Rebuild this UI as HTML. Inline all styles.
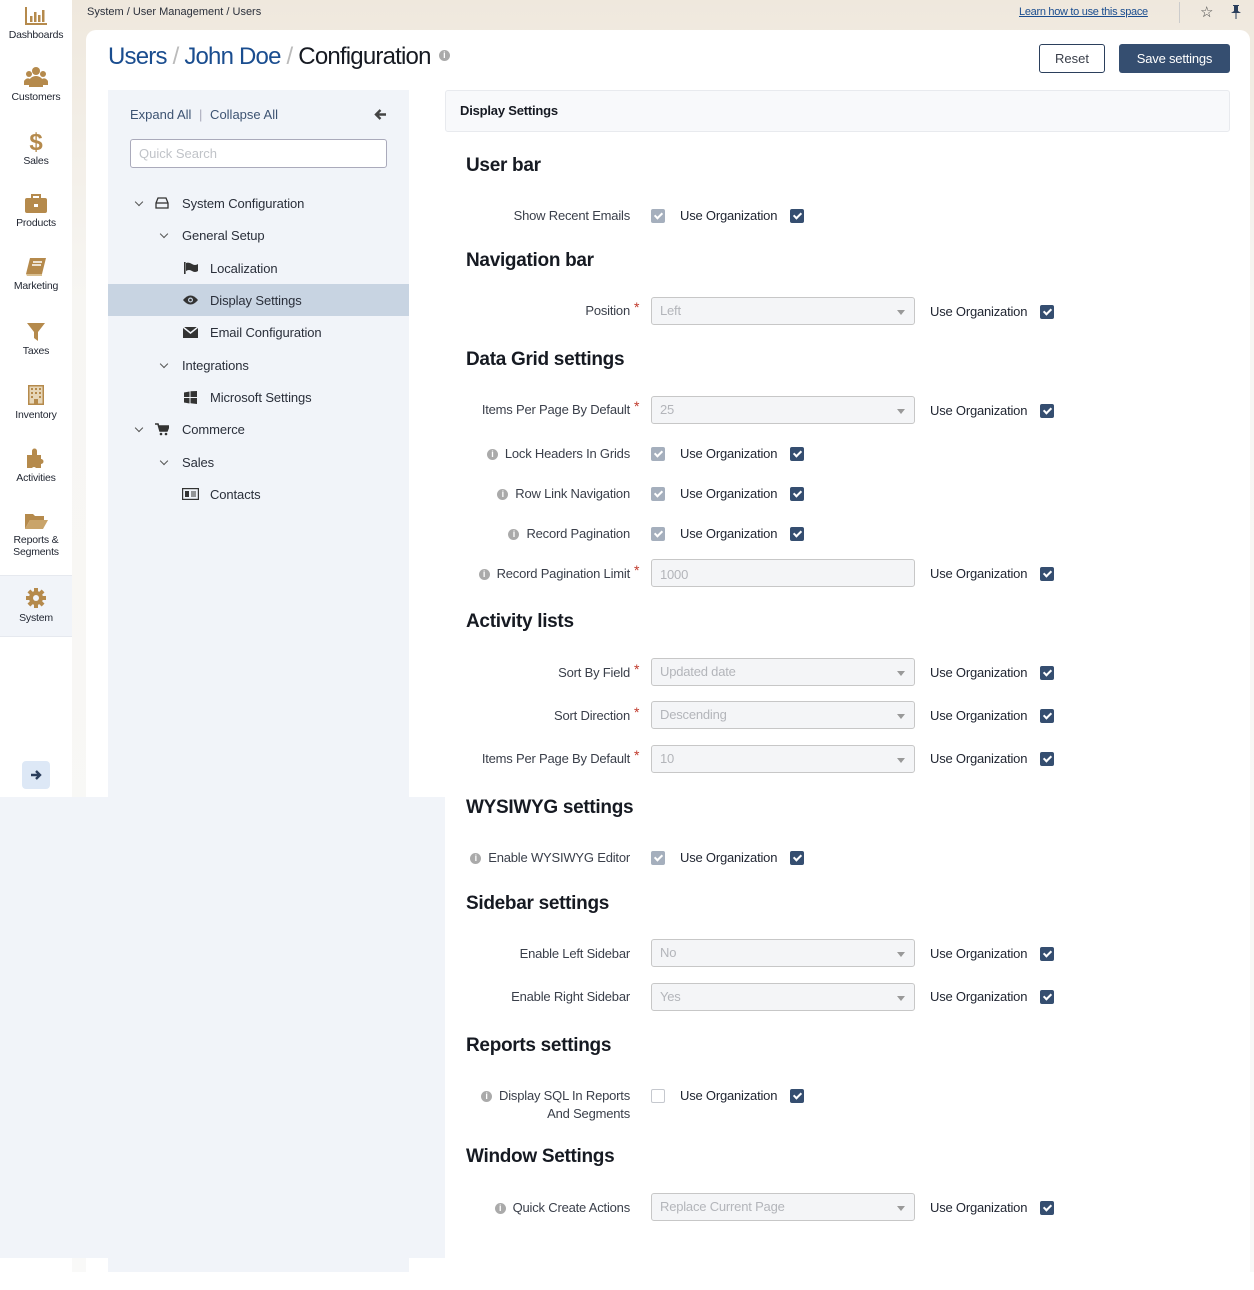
<!DOCTYPE html>
<html><head><meta charset="utf-8"><style>
*{box-sizing:border-box;margin:0;padding:0}
body{width:1254px;height:1290px;position:relative;overflow:hidden;background:#fff;font-family:"Liberation Sans",sans-serif;color:#2a2f3a}
.a{position:absolute}
.nav{left:0;top:0;width:72px;height:1272px;background:#fff}
.ni{position:absolute;left:0;width:72px;text-align:center;font-size:10.5px;color:#1f2430;letter-spacing:-.2px}
.ni svg{display:block;margin:0 auto 3px}
.bg{left:72px;top:0;width:1182px;height:1272px;background:linear-gradient(#efe8dd,#f7f6f3 300px,#f9f9f8)}
.card{left:86px;top:30px;width:1164px;height:1242px;background:#fff;border-radius:10px 10px 0 0}
.tree{left:108px;top:90px;width:301px;height:1182px;background:#f1f4f9}
.ti{position:absolute;font-size:13px;color:#2a2f3a;letter-spacing:-.1px;white-space:nowrap}
.chev{position:absolute;width:6px;height:6px;border-right:1.3px solid #555;border-bottom:1.3px solid #555;transform:rotate(45deg)}
.h{position:absolute;left:466px;font-size:19px;font-weight:bold;color:#161a22;letter-spacing:-.3px}
.lb{position:absolute;right:624px;font-size:13px;color:#3a3f4a;text-align:right;white-space:nowrap;letter-spacing:-.2px;line-height:18px}
.star{position:absolute;left:634px;color:#c0392b;font-size:14px}
.sel{position:absolute;left:651px;width:264px;height:28px;border:1px solid #c7c7c7;border-radius:3px;background:#f4f5f7;font-size:13px;color:#b3b5ba;padding:5px 8px;letter-spacing:-.2px}
.sel:after{content:"";position:absolute;right:9px;top:12px;border-left:4px solid transparent;border-right:4px solid transparent;border-top:5px solid #999}
.sel.in:after{display:none}
.uo{position:absolute;font-size:13px;color:#1f2430;letter-spacing:-.2px}
.ck{position:absolute;width:14px;height:14px;border-radius:2px;background:#354e70}
.ck:after{content:"";position:absolute;left:4.5px;top:2px;width:3px;height:6px;border-right:2px solid #fff;border-bottom:2px solid #fff;transform:rotate(45deg)}
.ck.g{background:#a5afbd}
.ck.e{background:#fff;border:1px solid #c5c8ce}.ck.e:after{display:none}
.inf{display:inline-block;width:11px;height:11px;border-radius:50%;background:#aaa;color:#fff;font-size:9px;line-height:11px;text-align:center;font-weight:bold;margin-right:7px;vertical-align:1px}
</style></head><body>
<div class="a bg"></div>
<div class="a nav">
<div class="ni" style="top:6px"><svg width="24" height="20" viewBox="0 0 24 20"><path d="M2 1v17h21" stroke="#b58a4c" stroke-width="2" fill="none"/><rect x="6" y="10" width="2.5" height="6" fill="#b58a4c"/><rect x="10" y="6" width="2.5" height="10" fill="#b58a4c"/><rect x="14" y="9" width="2.5" height="7" fill="#b58a4c"/><rect x="18" y="4" width="2.5" height="12" fill="#b58a4c"/></svg>Dashboards</div>
<div class="ni" style="top:66px"><svg width="24" height="22" viewBox="0 0 24 22"><circle cx="12" cy="5" r="4" fill="#b58a4c"/><circle cx="5" cy="8" r="3" fill="#b58a4c"/><circle cx="19" cy="8" r="3" fill="#b58a4c"/><path d="M5 21v-5a7 6 0 0 1 14 0v5z" fill="#b58a4c"/><path d="M0 17a4 4 0 0 1 6-4v6H0zM24 17a4 4 0 0 0-6-4v6h6z" fill="#b58a4c"/></svg>Customers</div>
<div class="ni" style="top:130px"><svg width="24" height="22" viewBox="0 0 24 22"><text x="12" y="20" text-anchor="middle" font-size="24" font-weight="bold" fill="#b58a4c" font-family="Liberation Sans">$</text></svg>Sales</div>
<div class="ni" style="top:194px"><svg width="24" height="20" viewBox="0 0 24 20"><rect x="1" y="4" width="22" height="15" rx="2" fill="#b58a4c"/><rect x="8" y="1" width="8" height="4" fill="none" stroke="#b58a4c" stroke-width="2"/><rect x="10" y="10" width="4" height="3" fill="#fff"/></svg>Products</div>
<div class="ni" style="top:257px"><svg width="24" height="20" viewBox="0 0 24 20"><path d="M6 1h16l-4 16H2z" fill="#b58a4c"/><path d="M2 17h16v2H3z" fill="#d9bf90"/><path d="M9 5h9M8 8h9" stroke="#fff" stroke-width="1.5"/></svg>Marketing</div>
<div class="ni" style="top:322px"><svg width="24" height="20" viewBox="0 0 24 20"><path d="M3 1h18l-7 9v9l-4-3v-6z" fill="#b58a4c"/></svg>Taxes</div>
<div class="ni" style="top:384px"><svg width="24" height="22" viewBox="0 0 24 22"><rect x="4" y="1" width="16" height="20" fill="#b58a4c"/><rect x="5.5" y="2.5" width="13" height="17" fill="#e6d6b8"/><g fill="#b58a4c"><rect x="7" y="4" width="2" height="2"/><rect x="11" y="4" width="2" height="2"/><rect x="15" y="4" width="2" height="2"/><rect x="7" y="8" width="2" height="2"/><rect x="11" y="8" width="2" height="2"/><rect x="15" y="8" width="2" height="2"/><rect x="7" y="12" width="2" height="2"/><rect x="15" y="12" width="2" height="2"/><rect x="10" y="15" width="4" height="6"/></g></svg>Inventory</div>
<div class="ni" style="top:447px"><svg width="24" height="22" viewBox="0 0 24 22"><path d="M3 8h5V4a2.5 2.5 0 0 1 5 0v4h4v4a2.5 2.5 0 0 1 0 5v4h-5a2.5 2.5 0 0 0-4 0H3z" fill="#b58a4c"/></svg>Activities</div>
<div class="ni" style="top:511px"><svg width="24" height="20" viewBox="0 0 24 20"><path d="M1 3h8l2 2h9v4H6L1 18z" fill="#b58a4c"/><path d="M6 9h18l-5 9H1z" fill="#c9a46a"/></svg>Reports &amp;<br>Segments</div>
<div style="position:absolute;left:0;top:575px;width:72px;height:62px;background:#f1f4f9;border-top:1px solid #e6e9ef;border-bottom:1px solid #e6e9ef"></div>
<div class="ni" style="top:587px"><svg width="22" height="22" viewBox="0 0 22 22"><g fill="#b58a4c"><circle cx="11" cy="11" r="7"/><rect x="9" y="1" width="4" height="20"/><rect x="1" y="9" width="20" height="4"/><rect x="9" y="1" width="4" height="20" transform="rotate(45 11 11)"/><rect x="9" y="1" width="4" height="20" transform="rotate(-45 11 11)"/></g><circle cx="11" cy="11" r="3" fill="#f1f4f9"/></svg>System</div>
<div style="position:absolute;left:22px;top:761px;width:28px;height:28px;background:#dde8f6;border-radius:4px"><svg style="position:absolute;left:8px;top:8px" width="12" height="12" viewBox="0 0 12 12"><path d="M1 6h9M6 2l4 4-4 4" stroke="#2b3f5c" stroke-width="2.4" fill="none"/></svg></div>
</div>
<div class="a" style="left:87px;top:6px;font-size:11px;color:#2a2f3a">System / User Management / Users</div>
<div class="a" style="left:1019px;top:6px;font-size:11px;color:#1a4d8f;text-decoration:underline;letter-spacing:-.3px">Learn how to use this space</div>
<div class="a" style="left:1179px;top:2px;width:1px;height:21px;background:#ccc"></div>
<div class="a" style="left:1200px;top:3px;font-size:15px;color:#444">☆</div>
<div class="a" style="left:1231px;top:5px;width:10px;height:14px"><svg width="10" height="14" viewBox="0 0 10 14"><path d="M2 0h6v1H7v5l3 2H0l3-2V1H2zM4.5 8h1v6h-1z" fill="#2b3f5c"/></svg></div>
<div class="a card"></div>
<div class="a" style="left:108px;top:43px;font-size:24px;letter-spacing:-.8px;white-space:nowrap"><span style="color:#1a4d8f">Users</span> <span style="color:#bbb">/</span> <span style="color:#1a4d8f">John Doe</span> <span style="color:#bbb">/</span> <span style="color:#161a22">Configuration</span> <span class="inf" style="vertical-align:6px;margin-left:2px">i</span></div>
<div class="a" style="left:1039px;top:44px;width:66px;height:29px;border:1px solid #2b3f5c;border-radius:3px;font-size:13px;color:#3a3f4a;text-align:center;line-height:27px">Reset</div>
<div class="a" style="left:1119px;top:44px;width:111px;height:29px;background:#354e70;border-radius:3px;font-size:13px;color:#fff;text-align:center;line-height:29px;letter-spacing:-.2px">Save settings</div>
<div class="a tree"></div>
<div class="a" style="left:130px;top:107px;font-size:13px;color:#3d5372">Expand All <span style="color:#aab;margin:0 4px">|</span> Collapse All</div>
<svg class="a" style="left:374px;top:108px" width="13" height="13" viewBox="0 0 13 13"><path d="M12 6.5H2M6.5 2L2 6.5 6.5 11" stroke="#444" stroke-width="2.4" fill="none"/></svg>
<div class="a" style="left:130px;top:139px;width:257px;height:29px;border:1px solid #aab;border-radius:3px;background:#fff;font-size:13px;color:#c0c3c8;padding:6px 8px">Quick Search</div>
<div class="a" style="left:108px;top:284px;width:301px;height:32px;background:#c8d4e2"></div>
<div class="chev" style="left:136px;top:199px"></div><svg class="a" style="left:155px;top:197px" width="14" height="12" viewBox="0 0 14 12"><path d="M1 6l2-5h8l2 5v5H1z" fill="none" stroke="#333" stroke-width="1.3"/><path d="M1 6h12" stroke="#333" stroke-width="1.3"/></svg><div class="ti" style="left:182px;top:196px">System Configuration</div>
<div class="chev" style="left:161px;top:231px"></div><div class="ti" style="left:182px;top:228px">General Setup</div>
<svg class="a" style="left:184px;top:262px" width="15" height="12" viewBox="0 0 15 12"><rect x="0" y="0" width="1.6" height="12" fill="#333"/><path d="M2 1q3-1 6 1t6 0v7q-3 2-6 0t-6 0z" fill="#333"/></svg><div class="ti" style="left:210px;top:261px">Localization</div>
<svg class="a" style="left:183px;top:295px" width="15" height="10" viewBox="0 0 15 10"><path d="M0 5q7.5-9 15 0q-7.5 9-15 0z" fill="#333"/><circle cx="7.5" cy="5" r="2.5" fill="#c8d4e2"/><circle cx="7.5" cy="5" r="1.3" fill="#333"/></svg><div class="ti" style="left:210px;top:293px">Display Settings</div>
<svg class="a" style="left:183px;top:327px" width="15" height="11" viewBox="0 0 15 11"><rect width="15" height="11" fill="#333"/><path d="M0 0l7.5 6L15 0" stroke="#f1f4f9" stroke-width="1.5" fill="none"/></svg><div class="ti" style="left:210px;top:325px">Email Configuration</div>
<div class="chev" style="left:161px;top:361px"></div><div class="ti" style="left:182px;top:358px">Integrations</div>
<svg class="a" style="left:184px;top:391px" width="13" height="13" viewBox="0 0 13 13"><path d="M0 1.5l5.5-1v5.5H0zM6.5 0.3L13 0v6H6.5zM0 7h5.5v5.5L0 11.5zM6.5 7H13v6l-6.5-.7z" fill="#333"/></svg><div class="ti" style="left:210px;top:390px">Microsoft Settings</div>
<div class="chev" style="left:136px;top:425px"></div><svg class="a" style="left:155px;top:423px" width="14" height="13" viewBox="0 0 14 13"><path d="M0 1h3l2 7h7l2-5H4" fill="none" stroke="#333" stroke-width="1.6"/><path d="M4 3h10l-2 5H5z" fill="#333"/><circle cx="6" cy="11" r="1.3" fill="#333"/><circle cx="11" cy="11" r="1.3" fill="#333"/></svg><div class="ti" style="left:182px;top:422px">Commerce</div>
<div class="chev" style="left:161px;top:458px"></div><div class="ti" style="left:182px;top:455px">Sales</div>
<svg class="a" style="left:182px;top:488px" width="17" height="12" viewBox="0 0 17 12"><rect x=".6" y=".6" width="15.8" height="10.8" fill="none" stroke="#333" stroke-width="1.2"/><rect x="3" y="3" width="4" height="6" fill="#333"/><path d="M9 4h5M9 6h5M9 8h5" stroke="#333"/></svg><div class="ti" style="left:210px;top:487px">Contacts</div>

<div class="a" style="left:445px;top:90px;width:785px;height:42px;background:#f8f9fb;border:1px solid #e8eaee;border-radius:3px;font-size:13px;font-weight:bold;color:#161a22;padding:12px 14px;letter-spacing:-.2px">Display Settings</div>

<div class="h" style="top:155px">User bar</div>
<div class="lb" style="top:207px">Show Recent Emails</div><div class="ck g" style="left:651px;top:209px"></div><div class="uo" style="left:680px;top:208px">Use Organization</div><div class="ck" style="left:790px;top:209px"></div>

<div class="h" style="top:250px">Navigation bar</div>
<div class="lb" style="top:302px">Position</div><div class="star" style="top:299px">*</div><div class="sel" style="top:297px">Left</div><div class="uo" style="left:930px;top:304px">Use Organization</div><div class="ck" style="left:1040px;top:305px"></div>

<div class="h" style="top:349px">Data Grid settings</div>
<div class="lb" style="top:401px">Items Per Page By Default</div><div class="star" style="top:398px">*</div><div class="sel" style="top:396px">25</div><div class="uo" style="left:930px;top:403px">Use Organization</div><div class="ck" style="left:1040px;top:404px"></div>
<div class="lb" style="top:445px"><span class="inf">i</span>Lock Headers In Grids</div><div class="ck g" style="left:651px;top:447px"></div><div class="uo" style="left:680px;top:446px">Use Organization</div><div class="ck" style="left:790px;top:447px"></div>
<div class="lb" style="top:485px"><span class="inf">i</span>Row Link Navigation</div><div class="ck g" style="left:651px;top:487px"></div><div class="uo" style="left:680px;top:486px">Use Organization</div><div class="ck" style="left:790px;top:487px"></div>
<div class="lb" style="top:525px"><span class="inf">i</span>Record Pagination</div><div class="ck g" style="left:651px;top:527px"></div><div class="uo" style="left:680px;top:526px">Use Organization</div><div class="ck" style="left:790px;top:527px"></div>
<div class="lb" style="top:565px"><span class="inf">i</span>Record Pagination Limit</div><div class="star" style="top:562px">*</div><div class="sel in" style="top:559px;padding-top:7px">1000</div><div class="uo" style="left:930px;top:566px">Use Organization</div><div class="ck" style="left:1040px;top:567px"></div>

<div class="h" style="top:611px">Activity lists</div>
<div class="lb" style="top:664px">Sort By Field</div><div class="star" style="top:661px">*</div><div class="sel" style="top:658px">Updated date</div><div class="uo" style="left:930px;top:665px">Use Organization</div><div class="ck" style="left:1040px;top:666px"></div>
<div class="lb" style="top:707px">Sort Direction</div><div class="star" style="top:704px">*</div><div class="sel" style="top:701px">Descending</div><div class="uo" style="left:930px;top:708px">Use Organization</div><div class="ck" style="left:1040px;top:709px"></div>
<div class="lb" style="top:750px">Items Per Page By Default</div><div class="star" style="top:747px">*</div><div class="sel" style="top:745px">10</div><div class="uo" style="left:930px;top:751px">Use Organization</div><div class="ck" style="left:1040px;top:752px"></div>

<div class="a" style="left:0;top:797px;width:445px;height:461px;background:#f1f4f9"></div>

<div class="h" style="top:797px">WYSIWYG settings</div>
<div class="lb" style="top:849px"><span class="inf">i</span>Enable WYSIWYG Editor</div><div class="ck g" style="left:651px;top:851px"></div><div class="uo" style="left:680px;top:850px">Use Organization</div><div class="ck" style="left:790px;top:851px"></div>

<div class="h" style="top:893px">Sidebar settings</div>
<div class="lb" style="top:945px">Enable Left Sidebar</div><div class="sel" style="top:939px">No</div><div class="uo" style="left:930px;top:946px">Use Organization</div><div class="ck" style="left:1040px;top:947px"></div>
<div class="lb" style="top:988px">Enable Right Sidebar</div><div class="sel" style="top:983px">Yes</div><div class="uo" style="left:930px;top:989px">Use Organization</div><div class="ck" style="left:1040px;top:990px"></div>

<div class="h" style="top:1035px">Reports settings</div>
<div class="lb" style="top:1087px"><span class="inf">i</span>Display SQL In Reports<br>And Segments</div><div class="ck e" style="left:651px;top:1089px"></div><div class="uo" style="left:680px;top:1088px">Use Organization</div><div class="ck" style="left:790px;top:1089px"></div>

<div class="h" style="top:1146px">Window Settings</div>
<div class="lb" style="top:1199px"><span class="inf">i</span>Quick Create Actions</div><div class="sel" style="top:1193px">Replace Current Page</div><div class="uo" style="left:930px;top:1200px">Use Organization</div><div class="ck" style="left:1040px;top:1201px"></div>
</body></html>
